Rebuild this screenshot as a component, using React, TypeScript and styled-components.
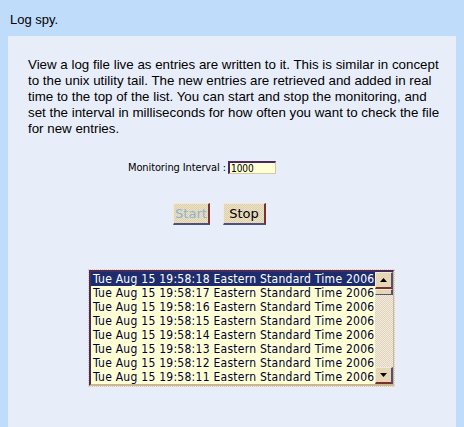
import React from "react";
import styled, { createGlobalStyle } from "styled-components";

const Global = createGlobalStyle`
  html, body { margin: 0; padding: 0; background: #c0dcfb; }
  body { font-family: "Liberation Sans", Arial, sans-serif; }
`;

const Page = styled.div`
  width: 464px;
  height: 427px;
  background: #c0dcfb;
  display: flex;
  flex-direction: column;
  padding: 0 8px;
  box-sizing: border-box;
  overflow: hidden;
`;

const Title = styled.div`
  height: 36px;
  font-size: 13px;
  color: #000;
  padding: 12px 0 0 2px;
  box-sizing: border-box;
`;

const Panel = styled.div`
  flex: 1;
  background: #e8eef9;
  display: flex;
  flex-direction: column;
  align-items: flex-start;
  padding: 21px 0 0;
`;

const Intro = styled.p`
  margin: 0 0 0 20px;
  width: 415px;
  font-size: 13.33px;
  line-height: 16px;
  color: #000;
`;

const IntervalRow = styled.div`
  margin: 24px 0 0 120px;
  display: flex;
  align-items: flex-start;
  gap: 2px;
  height: 14px;
`;

const Label = styled.span`
  font-family: Tahoma, "DejaVu Sans Condensed", "DejaVu Sans", sans-serif;
  font-size: 11px;
  line-height: 14px;
  letter-spacing: -0.12px;
  color: #000;
`;

const Input = styled.div`
  width: 43px;
  height: 10px;
  background: #ffffd6;
  border-top: 2px solid #4a2a5a;
  border-left: 2px solid #4a2a5a;
  border-right: 1px solid #d8c8a0;
  border-bottom: 1px solid #d8c8a0;
  font-family: Tahoma, "DejaVu Sans Condensed", sans-serif;
  font-size: 10px;
  line-height: 12px;
  padding: 0 1px;
  color: #000;
`;

const Buttons = styled.div`
  margin: 28px 0 0 165px;
  display: flex;
  gap: 13px;
`;

const Button = styled.div<{ $disabled?: boolean; $w: number }>`
  width: ${(p) => p.$w}px;
  height: 19px;
  box-sizing: content-box;
  background-color: #e6d6b4;
  background-image: repeating-conic-gradient(#efe2c4 0 25%, #dccfae 0 50%);
  background-size: 2px 2px;
  border-top: 1px solid #f2ead8;
  border-left: 1px solid #f2ead8;
  border-right: 2px solid #7a3030;
  border-bottom: 2px solid #505080;
  font-family: Tahoma, "DejaVu Sans", sans-serif;
  font-size: 13px;
  line-height: 19px;
  text-align: center;
  color: ${(p) => (p.$disabled ? "#8ab4d8" : "#000")};
`;

const ListOuter = styled.div`
  margin: 44px 0 0 80px;
  border: 1px dotted #e8c890;
`;

const ListBox = styled.div`
  width: 302px;
  height: 112px;
  background: #ffffd6;
  border-top: 2px solid #4a2a5a;
  border-left: 2px solid #4a2a5a;
  border-right: 1px solid #c8b898;
  border-bottom: 2px solid #c8b898;
  display: flex;
  overflow: hidden;
`;

const Items = styled.div`
  flex: 1;
  display: flex;
  flex-direction: column;
  overflow: hidden;
`;

const Item = styled.div<{ $sel?: boolean }>`
  height: 14px;
  line-height: 14px;
  font-family: Tahoma, "DejaVu Sans Condensed", "DejaVu Sans", sans-serif;
  font-size: 12px;
  letter-spacing: 0.26px;
  white-space: nowrap;
  padding-left: 2px;
  color: ${(p) => (p.$sel ? "#fff" : "#000030")};
  background: ${(p) => (p.$sel ? "#1c2c6c" : "transparent")};
`;

const ScrollBar = styled.div`
  width: 18px;
  flex-shrink: 0;
  display: flex;
  flex-direction: column;
  background-image: repeating-conic-gradient(#f4ecd8 0 25%, #dcd4c0 0 50%);
  background-size: 2px 2px;
`;

const Arrow = styled.div`
  height: 14px;
  background: #e6d6b4;
  border-top: 1px solid #f2ead8;
  border-left: 1px solid #f2ead8;
  border-right: 2px solid #505080;
  border-bottom: 2px solid #7a3030;
  display: flex;
  align-items: center;
  justify-content: center;
`;

const Thumb = styled.div`
  height: 4px;
  background: #e6d6b4;
  border-top: 1px solid #f2ead8;
  border-left: 1px solid #f2ead8;
  border-right: 2px solid #505080;
  border-bottom: 1px solid #505080;
`;

const Track = styled.div`
  flex: 1;
`;

const Tri = ({ up }: { up?: boolean }) => (
  <svg width="7" height="4" viewBox="0 0 7 4">
    <polygon points={up ? "3.5,0 7,4 0,4" : "0,0 7,0 3.5,4"} fill="#000" />
  </svg>
);

const entries = [18, 17, 16, 15, 14, 13, 12, 11];

export default function App() {
  return (
    <Page>
      <Global />
      <Title>Log spy.</Title>
      <Panel>
        <Intro>
          View a log file live as entries are written to it. This is similar in concept to the unix
          utility tail. The new entries are retrieved and added in real time to the top of the list.
          You can start and stop the monitoring, and set the interval in milliseconds for how often
          you want to check the file for new entries.
        </Intro>
        <IntervalRow>
          <Label>Monitoring Interval :</Label>
          <Input>1000</Input>
        </IntervalRow>
        <Buttons>
          <Button $disabled $w={34}>Start</Button>
          <Button $w={40}>Stop</Button>
        </Buttons>
        <ListOuter>
          <ListBox>
            <Items>
              {entries.map((s, i) => (
                <Item key={s} $sel={i === 0}>
                  Tue Aug 15 19:58:{s} Eastern Standard Time 2006
                </Item>
              ))}
            </Items>
            <ScrollBar>
              <Arrow>
                <Tri up />
              </Arrow>
              <Thumb />
              <Track />
              <Arrow>
                <Tri />
              </Arrow>
            </ScrollBar>
          </ListBox>
        </ListOuter>
      </Panel>
    </Page>
  );
}
